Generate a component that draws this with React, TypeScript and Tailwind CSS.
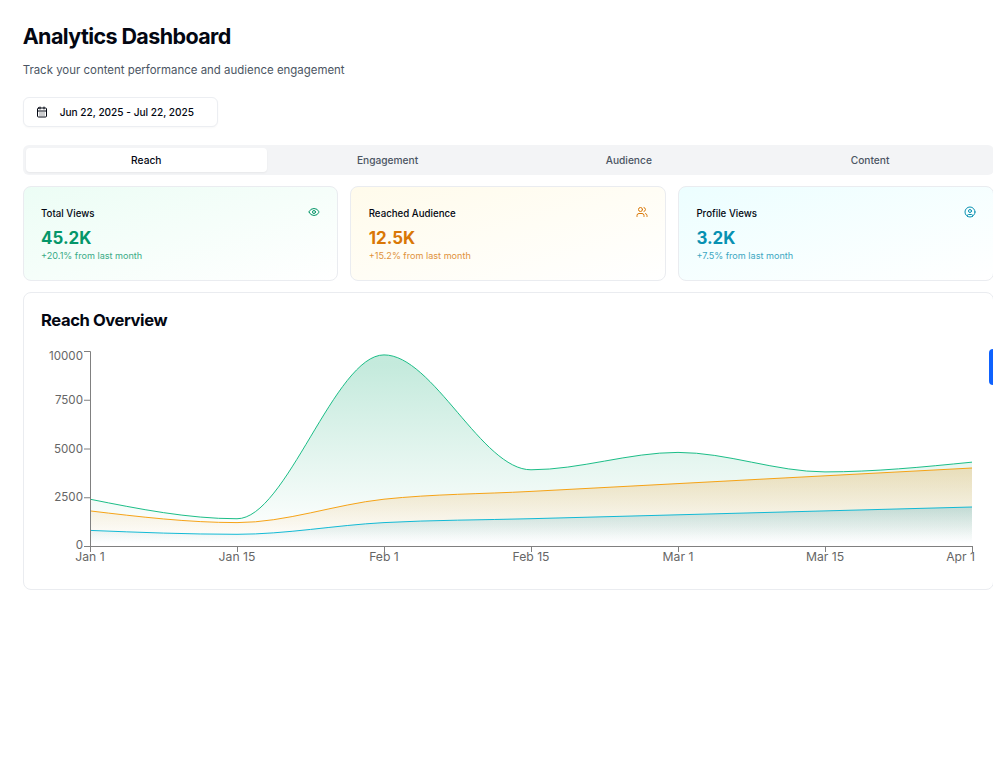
import { CalendarDays, Eye, Users, CircleUser } from 'lucide-react';

const WIDTH = 993;
const X0 = 66;
const STEP = 147;
const Y0 = 214;
const SCALE = 195 / 10000;

const green = [2400, 1398, 9800, 3908, 4800, 3800, 4300];
const orange = [1800, 1200, 2400, 2800, 3200, 3600, 4000];
const cyan = [800, 600, 1200, 1400, 1600, 1800, 2000];
const xLabels = ['Jan 1', 'Jan 15', 'Feb 1', 'Feb 15', 'Mar 1', 'Mar 15', 'Apr 1'];
const yLabels = [0, 2500, 5000, 7500, 10000];

const sign = (v: number) => (v < 0 ? -1 : 1);

// same maths as a monotone-x curve, so the peaks flatten like the chart lib does
const monotonePath = (vals: number[]) => {
  const pts = vals.map((v, i) => [X0 + i * STEP, Y0 - v * SCALE]);
  const n = pts.length;
  const slopes = pts.slice(0, -1).map((p, i) => (pts[i + 1][1] - p[1]) / STEP);
  const t: number[] = [];
  for (let i = 0; i < n; i++) {
    if (i === 0 || i === n - 1) {
      t.push(0);
    } else {
      const a = slopes[i - 1];
      const b = slopes[i];
      t.push((sign(a) + sign(b)) * Math.min(Math.abs(a), Math.abs(b), 0.5 * Math.abs((a + b) / 2)) || 0);
    }
  }
  t[0] = (3 * slopes[0] - t[1]) / 2;
  t[n - 1] = (3 * slopes[n - 2] - t[n - 2]) / 2;
  let d = `M${pts[0][0]},${pts[0][1]}`;
  for (let i = 0; i < n - 1; i++) {
    const h = STEP / 3;
    d += `C${pts[i][0] + h},${pts[i][1] + h * t[i]} ${pts[i + 1][0] - h},${pts[i + 1][1] - h * t[i + 1]} ${pts[i + 1][0]},${pts[i + 1][1]}`;
  }
  return d;
};

const series = [
  { id: 'g', color: '#10b981', fill: '#0aa86f', alpha: 0.24, vals: green },
  { id: 'o', color: '#f59e0b', fill: '#ea8a00', alpha: 0.22, vals: orange },
  { id: 'c', color: '#06b6d4', fill: '#0891b2', alpha: 0.2, vals: cyan },
];

const Chart = () => (
  <svg width={960} height={240} className="block" style={{ fontFamily: 'Inter, sans-serif' }}>
    <defs>
      {series.map((s) => (
        <linearGradient key={s.id} id={s.id} x1="0" y1="0" x2="0" y2="1">
          <stop offset="5%" stopColor={s.fill} stopOpacity={s.alpha} />
          <stop offset="95%" stopColor={s.fill} stopOpacity={0} />
        </linearGradient>
      ))}
    </defs>
    {series.map((s) => {
      const line = monotonePath(s.vals);
      return (
        <g key={s.id}>
          <path d={`${line}L${X0 + 6 * STEP},${Y0}L${X0},${Y0}Z`} fill={`url(#${s.id})`} />
          <path d={line} fill="none" stroke={s.color} strokeWidth={0.95} />
        </g>
      );
    })}
    <path d={`M${X0 - 6}.5,19.5H${X0}.5V${Y0}.5H${X0 + 6 * STEP}.5`} fill="none" stroke="#808080" />
    {yLabels.map((v) => (
      <g key={v}>
        <line x1={X0 - 6} x2={X0} y1={Y0 - v * SCALE + 0.5} y2={Y0 - v * SCALE + 0.5} stroke="#808080" />
        <text x={X0 - 7} y={Y0 - v * SCALE + (v === 10000 ? 9 : v === 0 ? 3 : 4)} textAnchor="end" fontSize={11.6} fill="#666">
          {v}
        </text>
      </g>
    ))}
    {xLabels.map((l, i) => (
      <g key={l}>
        <line x1={X0 + i * STEP + 0.5} x2={X0 + i * STEP + 0.5} y1={Y0} y2={Y0 + 6} stroke="#808080" />
        <text
          x={i === 6 ? X0 + i * STEP + 3 : X0 + i * STEP}
          y={Y0 + 15}
          textAnchor={i === 6 ? 'end' : 'middle'}
          fontSize={12.2}
          fill="#666"
        >
          {l}
        </text>
      </g>
    ))}
  </svg>
);

const stats = [
  {
    label: 'Total Views',
    value: '45.2K',
    delta: '+20.1% from last month',
    bg: 'from-[#ecfdf5] to-white',
    text: 'text-[#059669]',
    Icon: Eye,
  },
  {
    label: 'Reached Audience',
    value: '12.5K',
    delta: '+15.2% from last month',
    bg: 'from-[#fffbeb] to-white',
    text: 'text-[#d97706]',
    Icon: Users,
  },
  {
    label: 'Profile Views',
    value: '3.2K',
    delta: '+7.5% from last month',
    bg: 'from-[#ecfeff] to-white',
    text: 'text-[#0891b2]',
    Icon: CircleUser,
  },
];

const tabs = ['Reach', 'Engagement', 'Audience', 'Content'];

export default function App() {
  return (
    <div className="relative h-[770px] overflow-hidden bg-white font-['Inter',sans-serif]" style={{ width: WIDTH }}>
      <div className="w-[1016.34px] px-[22.67px] pt-[22.67px]">
        <h1 className="text-[21.5px] leading-[26px] font-bold tracking-[-0.6px] text-[#030712]">Analytics Dashboard</h1>
        <p className="mt-[7px] text-[11.45px] leading-[28px] text-[#4b5563]">Track your content performance and audience engagement</p>

        <button className="mt-[13px] flex h-[30.2px] w-[195px] items-center rounded-[6px] border border-[#eceef2] bg-white pt-[1px] pl-[12px] text-[10.1px] font-medium text-[#030712] shadow-[0_1px_2px_rgba(0,0,0,0.03)]">
          <CalendarDays className="mr-[12px] h-[12px] w-[12px]" />
          Jun 22, 2025 - Jul 22, 2025
        </button>

        <div className="mt-[18px] grid h-[30.2px] grid-cols-4 rounded-[6px] bg-[#f3f4f6] p-[3px]">
          {tabs.map((t, i) => (
            <div
              key={t}
              className={
                i === 0
                  ? 'flex items-center justify-center rounded-[4px] bg-white pt-[1px] text-[10.2px] font-medium text-[#030712] shadow-[0_1px_2px_rgba(0,0,0,0.05)]'
                  : 'flex items-center justify-center pt-[1px] text-[10.2px] font-medium text-[#4b5563]'
              }
            >
              {t}
            </div>
          ))}
        </div>

        <div className="mt-[11px] grid grid-cols-3 gap-[12px]">
          {stats.map((s) => (
            <div key={s.label} className={`h-[94.5px] rounded-[8px] border border-[#eaecf0] bg-gradient-to-br pt-[18.5px] pr-[17px] pl-[17.4px] ${s.bg}`}>
              <div className="flex h-[16px] items-center justify-between">
                <span className="mt-[2px] text-[9.7px] font-medium text-[#030712]">{s.label}</span>
                <s.Icon className={`mb-[4px] h-[12px] w-[12px] ${s.text}`} />
              </div>
              <div className={`mt-[5.5px] text-[16.9px] leading-[22px] font-bold ${s.text}`}>{s.value}</div>
              <div className={`text-[9.1px] leading-[13px] opacity-80 ${s.text}`}>{s.delta}</div>
            </div>
          ))}
        </div>

        <div className="mt-[11.5px] h-[298px] rounded-[8px] border border-[#eaecf0] bg-white">
          <h2 className="pt-[15px] pl-[17.4px] text-[16.6px] leading-[24px] font-bold tracking-[-0.42px] text-[#030712]">Reach Overview</h2>
          <Chart />
        </div>
      </div>
      <div className="absolute top-[349px] right-0 h-[36px] w-[4.5px] rounded-l-[4px] bg-[#0f62fe]" />
    </div>
  );
}
